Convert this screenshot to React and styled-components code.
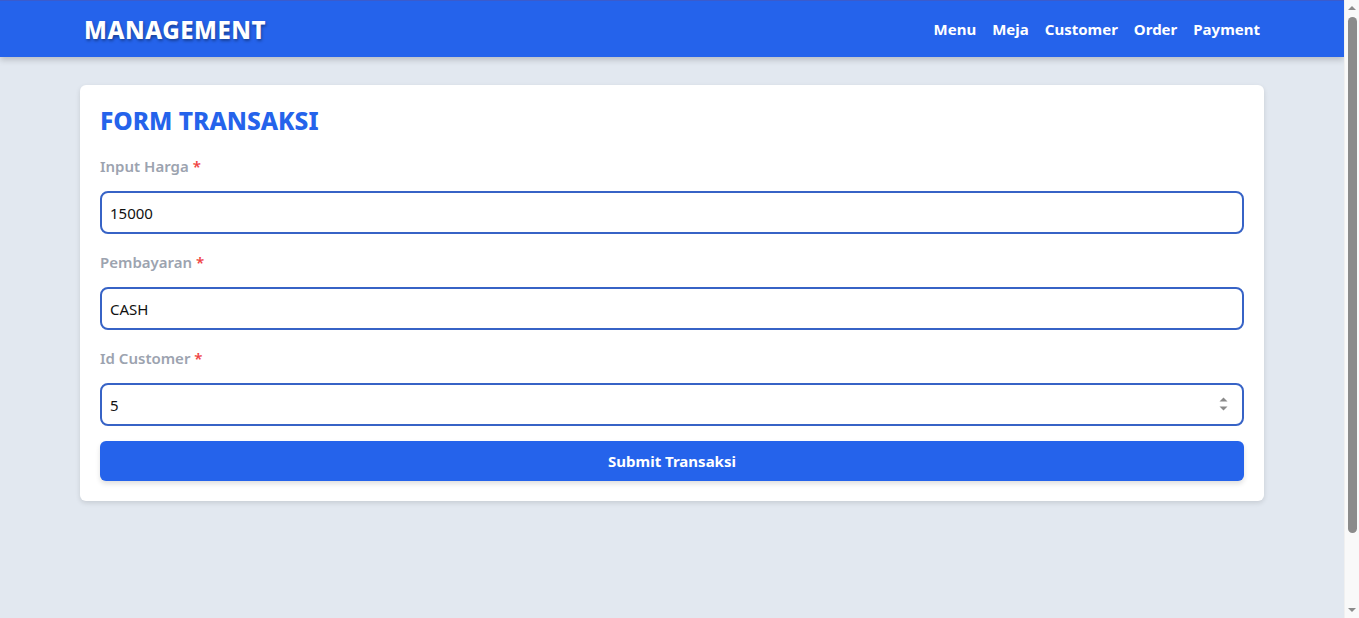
import styled, { createGlobalStyle } from "styled-components";
import { useState } from "react";

const GlobalStyle = createGlobalStyle`
  html, body {
    margin: 0;
    padding: 0;
    background: #e2e8f0;
    font-family: "Noto Sans", "Open Sans", sans-serif;
  }
`;

export default function App() {
    const [harga, setHarga] = useState("15000");
    const [bayar, setBayar] = useState("CASH");
    const [customer, setCustomer] = useState("5");

    function kirim(event) {
        event.preventDefault();
    }

    return (
        <Janela>
            <GlobalStyle />
            <Pagina>
                <Navbar>
                    <NavInner>
                        <Brand>MANAGEMENT</Brand>
                        <NavLinks>
                            <a href="#menu">Menu</a>
                            <a href="#meja">Meja</a>
                            <a href="#customer">Customer</a>
                            <a href="#order">Order</a>
                            <a href="#payment">Payment</a>
                        </NavLinks>
                    </NavInner>
                </Navbar>
                <Main>
                    <Card>
                        <Title>FORM TRANSAKSI</Title>
                        <Formulario onSubmit={kirim}>
                            <Field>
                                <Label>Input Harga <span>*</span></Label>
                                <Input type="text" value={harga} onChange={e => setHarga(e.target.value)} />
                            </Field>
                            <Field>
                                <Label>Pembayaran <span>*</span></Label>
                                <Input type="text" value={bayar} onChange={e => setBayar(e.target.value)} />
                            </Field>
                            <Field>
                                <Label>Id Customer <span>*</span></Label>
                                <InputWrap>
                                    <Input type="number" value={customer} onChange={e => setCustomer(e.target.value)} />
                                    <Spinner width="9" height="20" viewBox="0 0 9 20">
                                        <path d="M4.5 3.5 L8.5 7.5 L0.5 7.5 Z" fill="#8a8a8a" />
                                        <path d="M4.5 16.5 L8.5 12.5 L0.5 12.5 Z" fill="#8a8a8a" />
                                    </Spinner>
                                </InputWrap>
                            </Field>
                            <Botao type="submit">Submit Transaksi</Botao>
                        </Formulario>
                    </Card>
                </Main>
            </Pagina>
            <Trilho>
                <Seta $up />
                <Polegar />
                <Seta />
            </Trilho>
        </Janela>
    );
}

const Janela = styled.div`
    display: flex;
    min-height: 100vh;
`;

const Pagina = styled.div`
    flex: 1;
    min-width: 0;
`;

const Trilho = styled.div`
    width: 15px;
    height: 100vh;
    background: #f9f9f9;
    border-left: 1px solid #f0f0f0;
    box-sizing: border-box;
    display: flex;
    flex-direction: column;
    align-items: center;
    padding: 6px 0 6px;
`;

const Seta = styled.div`
    width: 0;
    height: 0;
    border-left: 4px solid transparent;
    border-right: 4px solid transparent;
    ${p => p.$up
        ? "border-bottom: 4px solid #8b8b8b; margin-bottom: 7px;"
        : "border-top: 4px solid #8b8b8b; margin-top: auto;"}
`;

const Polegar = styled.div`
    width: 9px;
    height: 516px;
    border-radius: 5px;
    background: #8b8b8b;
`;

const Navbar = styled.header`
    height: 57px;
    background: #2563eb;
    border-top: 1px solid #3b5bcc;
    box-sizing: border-box;
    box-shadow: 0 3px 6px rgba(0, 0, 0, 0.18);
`;

const NavInner = styled.div`
    max-width: 1176px;
    margin: 0 auto;
    height: 100%;
    display: flex;
    align-items: center;
    justify-content: space-between;
`;

const Brand = styled.h1`
    margin: 0;
    font-size: 24px;
    font-weight: 800;
    color: #fff;
    letter-spacing: 0.5px;
    text-shadow: 1px 2px 3px rgba(0, 0, 0, 0.35);
`;

const NavLinks = styled.nav`
    display: flex;
    gap: 16px;
    a {
        color: #fff;
        text-decoration: none;
        font-size: 15px;
        font-weight: 700;
    }
`;

const Main = styled.main`
    max-width: 1184px;
    margin: 28px auto 0;
`;

const Card = styled.section`
    background: #fff;
    border-radius: 6px;
    padding: 20px;
    box-shadow: 0 2px 5px rgba(0, 0, 0, 0.12);
`;

const Title = styled.h2`
    margin: 0 0 18px;
    font-size: 24.5px;
    line-height: 32px;
    font-weight: 800;
    color: #2563eb;
`;

const Formulario = styled.form`
    display: flex;
    flex-direction: column;
`;

const Field = styled.div`
    display: flex;
    flex-direction: column;
    margin-bottom: 17px;
    &:nth-last-child(2) {
        margin-bottom: 15px;
    }
`;

const Label = styled.label`
    font-size: 15px;
    line-height: 22px;
    font-weight: 600;
    color: #9ca3af;
    margin-bottom: 14px;
    span {
        color: #ef4444;
    }
`;

const InputWrap = styled.div`
    position: relative;
`;

const Input = styled.input`
    box-sizing: border-box;
    width: 100%;
    height: 43px;
    border: 2px solid #3763c6;
    border-radius: 8px;
    padding: 0 8px;
    font-family: "Noto Sans", sans-serif;
    font-size: 15px;
    color: #111;
    outline: none;
    -moz-appearance: textfield;
    &::-webkit-inner-spin-button,
    &::-webkit-outer-spin-button {
        -webkit-appearance: none;
        margin: 0;
    }
`;

const Spinner = styled.svg`
    position: absolute;
    right: 16px;
    top: 11px;
`;

const Botao = styled.button`
    height: 40px;
    border: none;
    border-radius: 6px;
    background: #2563eb;
    color: #fff;
    font-family: "Noto Sans", sans-serif;
    font-size: 15px;
    font-weight: 700;
    box-shadow: 0 3px 5px rgba(0, 0, 0, 0.12);
    cursor: pointer;
`;
